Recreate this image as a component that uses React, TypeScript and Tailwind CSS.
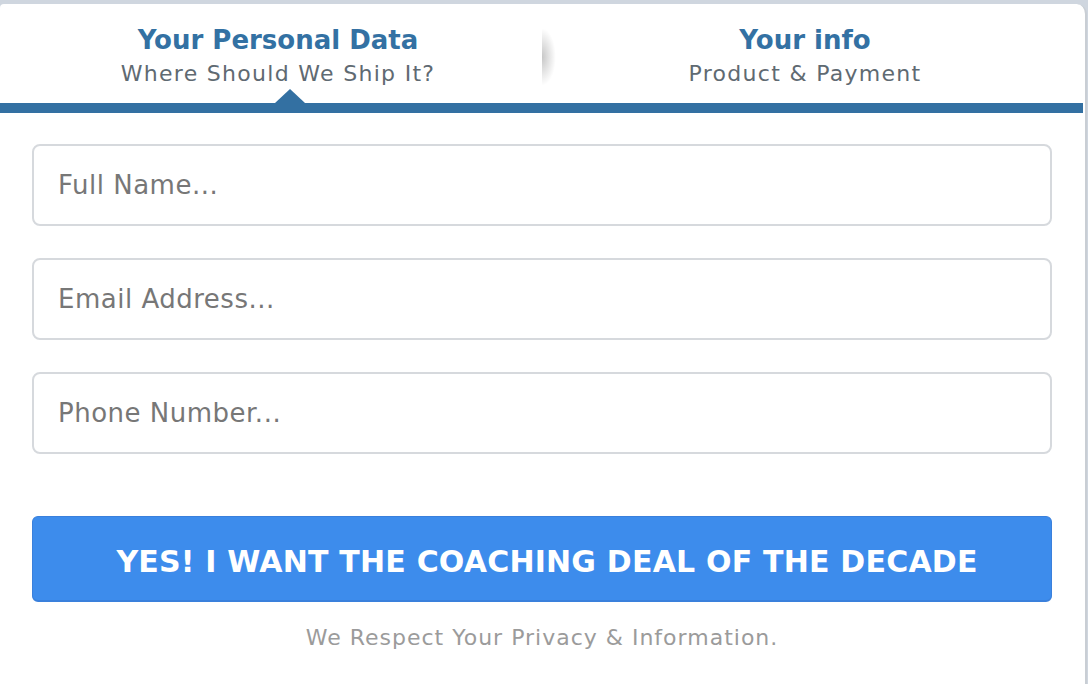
import React from 'react';

const font = { fontFamily: '"DejaVu Sans", "Open Sans", sans-serif' };

const fields = ['Full Name...', 'Email Address...', 'Phone Number...'];

const App: React.FC = () => {
  return (
    <div className="h-[684px] overflow-hidden bg-[#cfd6df] pt-[4px]" style={font}>
      <div className="h-[680px] w-[1087px] rounded-tl-[4px] rounded-tr-[10px] border-r-2 border-[#c9ced4] bg-white">
        {/* tabs */}
        <div className="relative flex h-[99px]">
          <div className="w-[542px] pl-[14px] pt-[20px] text-center">
            <div className="text-[26px] font-bold leading-[32px] text-[#3371a3]">Your Personal Data</div>
            <div className="mt-[5px] text-[22px] leading-[26px] tracking-[1.3px] text-[#5f6a72]">Where Should We Ship It?</div>
          </div>
          <div className="absolute left-[542px] top-[24px] h-[58px] w-[14px] bg-[radial-gradient(ellipse_at_left,rgba(0,0,0,0.22),transparent_70%)]" />
          <div className="w-[526px] pt-[20px] text-center">
            <div className="text-[26px] font-bold leading-[32px] text-[#3371a3]">Your info</div>
            <div className="mt-[5px] text-[22px] leading-[26px] tracking-[1.3px] text-[#5f6a72]">Product &amp; Payment</div>
          </div>
          <div className="absolute bottom-0 left-[275px] h-0 w-0 border-x-[15px] border-b-[14px] border-x-transparent border-b-[#3370a2]" />
        </div>
        <div className="h-[10px] w-[1083px] bg-[#3370a2]" />

        {/* form */}
        <div className="flex flex-col px-[32px] pt-[31px]">
          <div className="flex w-[1020px] flex-col gap-[32px]">
            {fields.map((f) => (
              <input
                key={f}
                placeholder={f}
                className="h-[82px] rounded-[8px] border-2 border-[#d6d9dd] bg-white pl-[24px] text-[26px] tracking-[0.5px] text-[#555] outline-none placeholder:text-[#777]"
                style={font}
              />
            ))}
          </div>
          <button
            className="mt-[62px] h-[86px] w-[1020px] rounded-[6px] border border-b-2 border-[#3a80dc] bg-[#3d8cec] pl-[10px] pt-[6px] text-[30px] font-bold tracking-[0.2px] text-white"
            style={font}
          >
            YES! I WANT THE COACHING DEAL OF THE DECADE
          </button>
          <div className="mt-[23px] w-[1020px] text-center text-[22px] leading-[26px] tracking-[1px] text-[#9b9b9b]">
            We Respect Your Privacy &amp; Information.
          </div>
        </div>
      </div>
    </div>
  );
};

export default App;
